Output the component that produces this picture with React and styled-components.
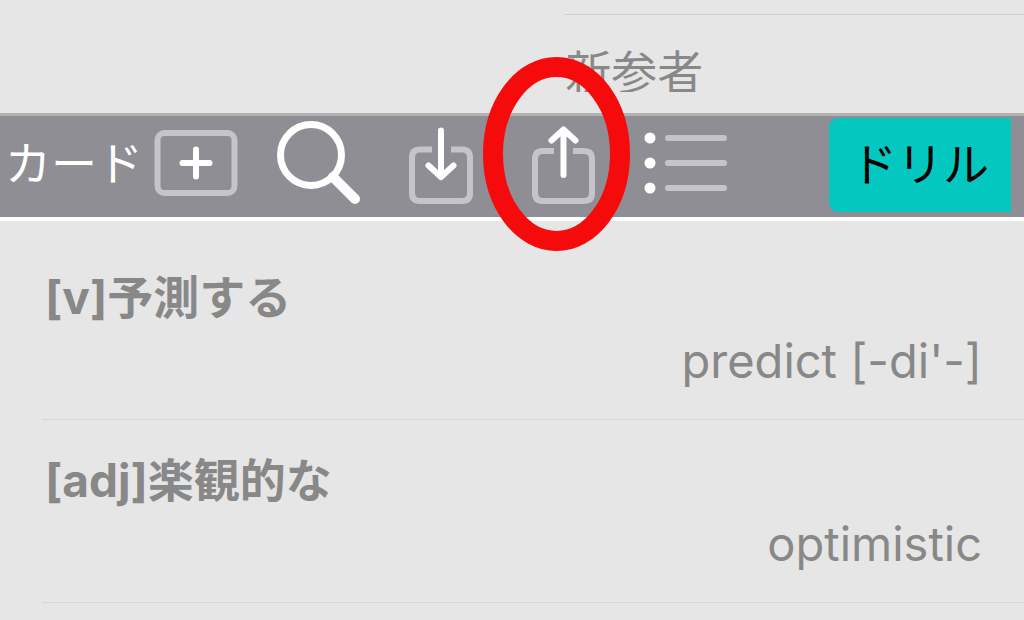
import React from "react";
import styled, { createGlobalStyle } from "styled-components";

const GlobalStyle = createGlobalStyle`
  body {
    margin: 0;
    background: #e6e6e6;
    color: #888888;
    font-family: "Inter", "Noto Sans CJK JP", sans-serif;
    font-size: 46px;
    overflow: hidden;
  }
`;

const Previous = styled.section`
  padding: 14px 0 21px 55%;
`;

const PreviousText = styled.div`
  height: 78px;
  margin-left: 1px;
  padding: 32px 0 0 1px;
  box-sizing: border-box;
  border-top: 1px solid #d0d0d0;
  line-height: 50px;
  overflow: hidden;
`;

const Toolbar = styled.header`
  display: flex;
  align-items: flex-start;
  height: 101px;
  padding: 0 13px 0 5px;
  background: #8f8e94;
  border-top: 3px solid #b2b2b3;
  border-bottom: 4px solid #ffffff;
`;

const Label = styled.span`
  width: 149px;
  flex-shrink: 0;
  color: #ffffff;
  line-height: 94px;
  white-space: nowrap;
`;

const Tools = styled.div`
  display: flex;
  gap: 36px;
  padding-top: 5px;
`;

const IconButton = styled.button`
  position: relative;
  width: 86px;
  height: 90px;
  padding: 0;
  border: none;
  background: none;
`;

const Icon = styled.svg`
  display: block;
  fill: none;
  stroke: ${(props) => props.$color || "#ffffff"};
  stroke-width: 6;
  stroke-linecap: round;
  stroke-linejoin: round;
`;

const Marker = styled.svg`
  position: absolute;
  z-index: 1;
  top: -64px;
  left: -37px;
  pointer-events: none;
`;

const DrillButton = styled.button`
  width: 182px;
  height: 94px;
  margin: 2px 0 0 auto;
  padding: 0 0 8px;
  border: none;
  border-radius: 9px 0 0 9px;
  background: #04c8c0;
  color: #000000;
  font: inherit;
  white-space: nowrap;
`;

const CardList = styled.ul`
  margin: 0;
  padding: 16px 0 0 42px;
  list-style: none;
`;

const Card = styled.li`
  padding: 28px 42px 26px 3px;
  border-bottom: 1px solid #d5d5d5;
  line-height: 64px;
`;

const Term = styled.div`
  font-weight: 700;
`;

const Meaning = styled.div`
  font-size: 47px;
  text-align: right;
`;

const cards = [
  { term: "[v]予測する", meaning: "predict [-di'-]" },
  { term: "[adj]楽観的な", meaning: "optimistic" },
];

const GRAY = "#c5c4ca";

const App = () => {
  return (
    <div lang="ja">
      <GlobalStyle />
      <Previous>
        <PreviousText>新参者</PreviousText>
      </Previous>
      <Toolbar>
        <Label>カード</Label>
        <Tools>
          <IconButton aria-label="カードを追加">
            <Icon width="86" height="90">
              <rect x="3.500" y="12" width="77" height="60" rx="7" stroke={GRAY} />
              <path d="M28.500 42H55.500M42 28.500V55.500" />
            </Icon>
          </IconButton>
          <IconButton aria-label="検索">
            <Icon width="86" height="90">
              <circle cx="35" cy="34" r="30.500" style={{ strokeWidth: 7 }} />
              <path d="M57 56L79 78" style={{ strokeWidth: 10 }} />
            </Icon>
          </IconButton>
          <IconButton aria-label="読み込み">
            <Icon width="86" height="90">
              <path
                d="M34 28.500H22Q14 28.500 14 36.500V72Q14 80 22 80H64Q72 80 72 72V36.500Q72 28.500 64 28.500H53"
                stroke={GRAY}
                style={{ strokeLinecap: "butt" }}
              />
              <path d="M43 9.500V56M30.500 44.500L43 56L55.500 44.500" />
            </Icon>
          </IconButton>
          <IconButton aria-label="書き出し">
            <Icon width="86" height="90">
              <path
                d="M34 30H23Q15 30 15 38V72Q15 80 23 80H64Q72 80 72 72V38Q72 30 64 30H53"
                stroke={GRAY}
                style={{ strokeLinecap: "butt" }}
              />
              <path d="M43.500 54V9M31.500 19.500L43.500 8.500L55.500 19.500" />
            </Icon>
            <Marker width="148" height="196">
              <ellipse
                cx="73.500"
                cy="97"
                rx="63.500"
                ry="87"
                fill="none"
                stroke="#f60b0c"
                strokeWidth="20"
              />
            </Marker>
          </IconButton>
          <IconButton aria-label="一覧">
            <Icon width="86" height="90" $color={GRAY}>
              <path d="M26 17H82M26 42H82M26 67H82" />
              <g fill="#ffffff" stroke="none">
                <circle cx="8" cy="17" r="5.500" />
                <circle cx="8" cy="42" r="5.500" />
                <circle cx="8" cy="67" r="5.500" />
              </g>
            </Icon>
          </IconButton>
        </Tools>
        <DrillButton>ドリル</DrillButton>
      </Toolbar>
      <CardList>
        {cards.map((card) => (
          <Card key={card.term}>
            <Term>{card.term}</Term>
            <Meaning>{card.meaning}</Meaning>
          </Card>
        ))}
      </CardList>
    </div>
  );
};

export default App;
